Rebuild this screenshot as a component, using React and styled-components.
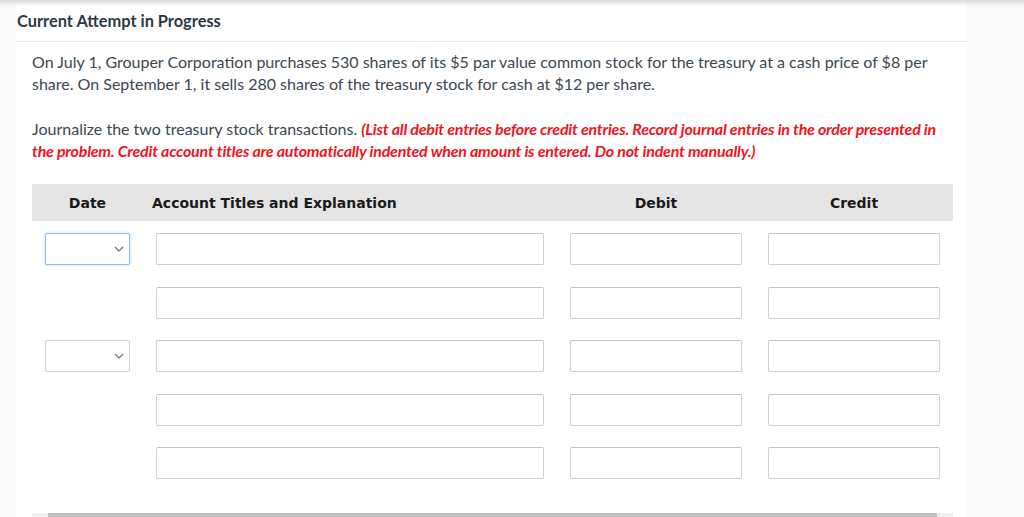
import React from "react";
import styled, { createGlobalStyle } from "styled-components";

const Global = createGlobalStyle`
  html, body { margin: 0; padding: 0; background: #f9f9f9; }
  body { font-family: Lato, "Open Sans", sans-serif; overflow: hidden; }
  * { box-sizing: border-box; }
`;

const Page = styled.div`
  position: relative;
  display: flex;
  width: 1024px;
  height: 517px;
  overflow: hidden;
  background: #f9f9f9;
`;

const TopShadow = styled.div`
  position: absolute;
  left: 0;
  top: 0;
  right: 0;
  height: 6px;
  background: linear-gradient(#d8d8d8, rgba(230, 230, 230, 0));
`;

const Panel = styled.main`
  margin-left: 16px;
  width: 951px;
  background: #fff;
  display: flex;
  flex-direction: column;
`;

const Title = styled.h1`
  margin: 0;
  padding: 10px 0 9px 1px;
  font-size: 16.4px;
  line-height: 22px;
  font-weight: 700;
  color: #2d3a45;
  border-bottom: 1px solid #e8e8e8;
`;

const Body = styled.section`
  padding: 9px 14px 0 16px;
  display: flex;
  flex-direction: column;
`;

const Para = styled.p`
  margin: 0 0 ${(p) => p.$mb || 0}px;
  font-size: 16px;
  line-height: 22px;
  color: #3b4753;
  padding-right: ${(p) => p.$pr ?? 20}px;
`;

const Note = styled.span`
  color: #f0141e;
  font-weight: 700;
  font-style: italic;
  letter-spacing: -0.22px;
`;

const Table = styled.div`
  display: flex;
  flex-direction: column;
  width: 921px;
`;

const Grid = styled.div`
  display: grid;
  grid-template-columns: 111px 414px 198px 198px;
`;

const HeadRow = styled(Grid)`
  background: #e5e5e5;
  height: 37px;
  align-items: center;
`;

const HeadCell = styled.div`
  font-family: "DejaVu Sans", Verdana, sans-serif;
  font-weight: 700;
  font-size: 14px;
  color: #1a1a1a;
  text-align: ${(p) => (p.$left ? "left" : "center")};
  padding: 0 13px 0 ${(p) => (p.$left ? 9 : 13)}px;
  white-space: nowrap;
`;

const Row = styled(Grid)`
  padding: 12px 0 9.5px;
`;

const Cell = styled.div`
  padding: 0 13px;
  display: flex;
`;

const Input = styled.div`
  flex: 1;
  height: 32px;
  background: #fff;
  border: 1px solid #cfcfcf;
  border-top-color: #c4c4c4;
  border-radius: 2px;
`;

const Select = styled.div`
  width: 86px;
  height: 32px;
  background: #fff;
  border: 1px solid ${(p) => (p.$focus ? "#8ebcf0" : "#cfcfcf")};
  box-shadow: ${(p) => (p.$focus ? "0 0 3px rgba(80,150,230,0.45)" : "none")};
  border-radius: 2px;
  display: flex;
  align-items: center;
  justify-content: flex-end;
  padding-right: 5px;
`;

const Scrollbar = styled.div`
  margin-top: 24px;
  width: 921px;
  height: 14px;
  background: #f1f1f1;
  display: flex;
  align-items: stretch;
`;

const ScrollArrow = styled.div`
  width: 16px;
`;

const Thumb = styled.div`
  flex: 1;
  background: #c1c1c1;
`;

const Chevron = () => (
  <svg width="10" height="6" viewBox="0 0 10 6">
    <path d="M1 1 L5 5 L9 1" fill="none" stroke="#6b6b6b" strokeWidth="1.1" />
  </svg>
);

const rows = [true, false, true, false, false];

export default function App() {
  return (
    <>
      <Global />
      <Page>
        <TopShadow />
        <Panel>
          <Title>Current Attempt in Progress</Title>
          <Body>
            <Para $mb={23}>
              On July 1, Grouper Corporation purchases 530 shares of its $5 par value common stock for the treasury at a cash price of $8 per share. On September 1, it sells 280 shares of the treasury stock for cash at $12 per share.
            </Para>
            <Para $mb={22} $pr={0}>
              Journalize the two treasury stock transactions.{" "}
              <Note>
                (List all debit entries before credit entries. Record journal entries in the order presented in the problem. Credit account titles are automatically indented when amount is entered. Do not indent manually.)
              </Note>
            </Para>
            <Table>
              <HeadRow>
                <HeadCell>Date</HeadCell>
                <HeadCell $left>Account Titles and Explanation</HeadCell>
                <HeadCell>Debit</HeadCell>
                <HeadCell>Credit</HeadCell>
              </HeadRow>
              {rows.map((hasDate, i) => (
                <Row key={i}>
                  <Cell>
                    {hasDate && (
                      <Select $focus={i === 0}>
                        <Chevron />
                      </Select>
                    )}
                  </Cell>
                  <Cell><Input /></Cell>
                  <Cell><Input /></Cell>
                  <Cell><Input /></Cell>
                </Row>
              ))}
            </Table>
            <Scrollbar>
              <ScrollArrow />
              <Thumb />
              <ScrollArrow />
            </Scrollbar>
          </Body>
        </Panel>
      </Page>
    </>
  );
}
